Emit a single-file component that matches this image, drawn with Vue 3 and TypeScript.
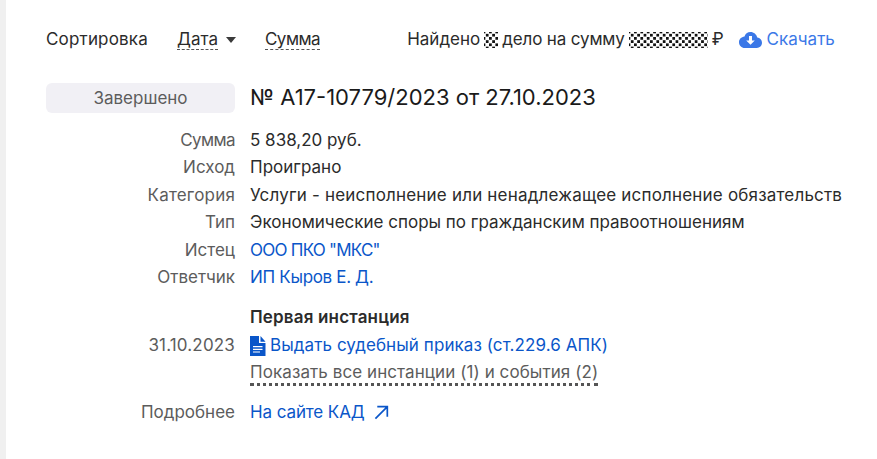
<script setup lang="ts">
interface Row { label: string; value: string; cls?: string; labelCls?: string }
const rows: Row[] = [
  { label: 'Сумма', value: '5 838,20 руб.', labelCls: 'tight-label' },
  { label: 'Исход', value: 'Проиграно' },
  { label: 'Категория', value: 'Услуги - неисполнение или ненадлежащее исполнение обязательств', cls: 'wide', labelCls: 'wide' },
  { label: 'Тип', value: 'Экономические споры по гражданским правоотношениям' },
  { label: 'Истец', value: 'ООО ПКО "МКС"', cls: 'link tighter' },
  { label: 'Ответчик', value: 'ИП Кыров Е. Д.', cls: 'link tight' },
]
</script>

<template>
  <div class="page">
    <div class="toolbar">
      <span class="sort-label">Сортировка</span>
      <span class="sort-item"><span class="dashed">Дата</span><i class="caret"></i></span>
      <span class="sort-item sum"><span class="dashed">Сумма</span></span>
      <span class="found">
        <span>Найдено</span><span class="blur short"></span><span class="found-mid">дело на сумму</span><span class="blur long"></span><span>₽</span>
      </span>
      <a class="download">
        <svg width="23" height="16" viewBox="0 0 23 16">
          <path fill="#3b78e7" d="M11.500 0c-3 0-5.400 1.900-6 4.600C2.300 5 0 7.300 0 10.200 0 13.400 2.500 16 5.700 16h12.100C20.700 16 23 13.700 23 10.800c0-2.700-2-4.900-4.700-5.200C17.500 2.400 14.800 0 11.500 0z"/>
          <path fill="#fff" d="M10 4h3v4.500h2.800l-4.300 4.300-4.300-4.300H10z"/>
        </svg>
        Скачать
      </a>
    </div>

    <div class="head">
      <div class="status">Завершено</div>
      <h2 class="title">№ А17-10779/2023 от 27.10.2023</h2>
    </div>

    <div class="rows">
      <template v-for="r in rows" :key="r.label">
        <div class="label" :class="r.labelCls">{{ r.label }}</div>
        <div class="value" :class="r.cls">{{ r.value }}</div>
      </template>
    </div>

    <div class="instance">
      <div class="label date">31.10.2023</div>
      <div class="inst-body">
        <div class="inst-title">Первая инстанция</div>
        <div class="doc link">
          <svg class="doc-icon" width="16" height="20" viewBox="0 0 16 20">
            <path fill="#0a56c9" d="M0 0h9v7h6.500v13H0z"/>
            <path fill="#0a56c9" d="M10.500 0l5 5.800h-5z"/>
            <path fill="#fff" d="M3 10h9.500v1.200H3zM3 12.700h9.500v1.200H3zM3 15.400h7v1.200H3z"/>
          </svg>
          <span>Выдать судебный приказ (ст.229.6 АПК)</span>
        </div>
        <div class="show-all"><span>Показать все инстанции (1) и события (2)</span></div>
      </div>
    </div>

    <div class="more">
      <div class="label">Подробнее</div>
      <div class="value link kad">
        <span>На сайте КАД</span>
        <svg width="15" height="15" viewBox="0 0 16 16" fill="none" stroke="#0a56c9" stroke-width="1.800">
          <path d="M1.500 14.500L14 2M3.500 1.800h10.700V12.500"/>
        </svg>
      </div>
    </div>
  </div>
</template>

<style scoped>
.page {
  box-sizing: border-box;
  width: 877px;
  height: 459px;
  overflow: hidden;
  background: #fff;
  border-left: 6px solid #f0f0f0;
  padding: 26px 0 0 40px;
  font-family: Inter, "Noto Sans", sans-serif;
  font-size: 17px;
  letter-spacing: 0;
  line-height: 27.4px;
  color: #2b2b2b;
  white-space: nowrap;
}
.toolbar {
  display: flex;
  align-items: center;
  height: 27px;
}
.sort-label { width: 131px; letter-spacing: 0.17px; }
.sort-item { display: inline-flex; align-items: center; }
.sum { margin-left: 29px; letter-spacing: -0.5px; }
.dashed {
  line-height: 20px;
  border-bottom: 1px dashed #555;
}
.caret {
  margin-left: 8px;
  width: 0;
  height: 0;
  border-left: 5px solid transparent;
  border-right: 5px solid transparent;
  border-top: 6px solid #3a3a3a;
}
.found {
  margin-left: 87px;
  display: inline-flex;
  align-items: center;
  gap: 4px;
}
.found-mid { letter-spacing: -0.15px; }
.blur {
  display: inline-block;
  height: 16px;
  background-image:
    radial-gradient(circle, #111 1.400px, transparent 1.800px),
    radial-gradient(circle, #111 1.400px, transparent 1.800px);
  background-size: 6.400px 6.400px;
  background-position: 0 0, 3.200px 3.200px;
}
.short { width: 14px; }
.long { width: 79px; }
.download {
  margin-left: 15px;
  display: inline-flex;
  align-items: center;
  gap: 5px;
  color: #3b78e7;
}
.head {
  display: flex;
  align-items: center;
  margin-top: 30px;
}
.status {
  width: 189px;
  height: 30px;
  line-height: 30px;
  text-align: center;
  background: #f1f0f5;
  border-radius: 6px;
  color: #5c5c5c;
}
.title {
  margin: 0 0 0 15px;
  font-size: 22px;
  font-weight: 400;
  line-height: 28px;
  padding-bottom: 2px;
  color: #1a1a1a;
}
.rows {
  display: grid;
  grid-template-columns: 189px 1fr;
  column-gap: 15px;
  margin-top: 14px;
}
.label {
  text-align: right;
  color: #5c5c5c;
}
.link { color: #0a56c9; }
.wide { letter-spacing: 0.19px; }
.tight { letter-spacing: -0.35px; }
.tighter { letter-spacing: -0.75px; }
.tight-label { letter-spacing: -0.6px; }
.instance {
  display: grid;
  grid-template-columns: 189px 1fr;
  column-gap: 15px;
  margin-top: 13px;
}
.date { align-self: center; letter-spacing: 0.17px; }
.inst-title { font-weight: 600; letter-spacing: 0.17px; }
.doc { display: flex; align-items: center; gap: 4px; letter-spacing: 0.08px; }
.show-all { color: #5c5c5c; letter-spacing: 0.08px; }
.show-all span {
  border-bottom: 3px dotted #555;
  padding-bottom: 1px;
  line-height: 20px;
  display: inline-block;
}
.more {
  display: grid;
  grid-template-columns: 189px 1fr;
  column-gap: 15px;
  margin-top: 12px;
}
.kad { display: flex; align-items: center; gap: 9px; letter-spacing: -0.1px; }
</style>
